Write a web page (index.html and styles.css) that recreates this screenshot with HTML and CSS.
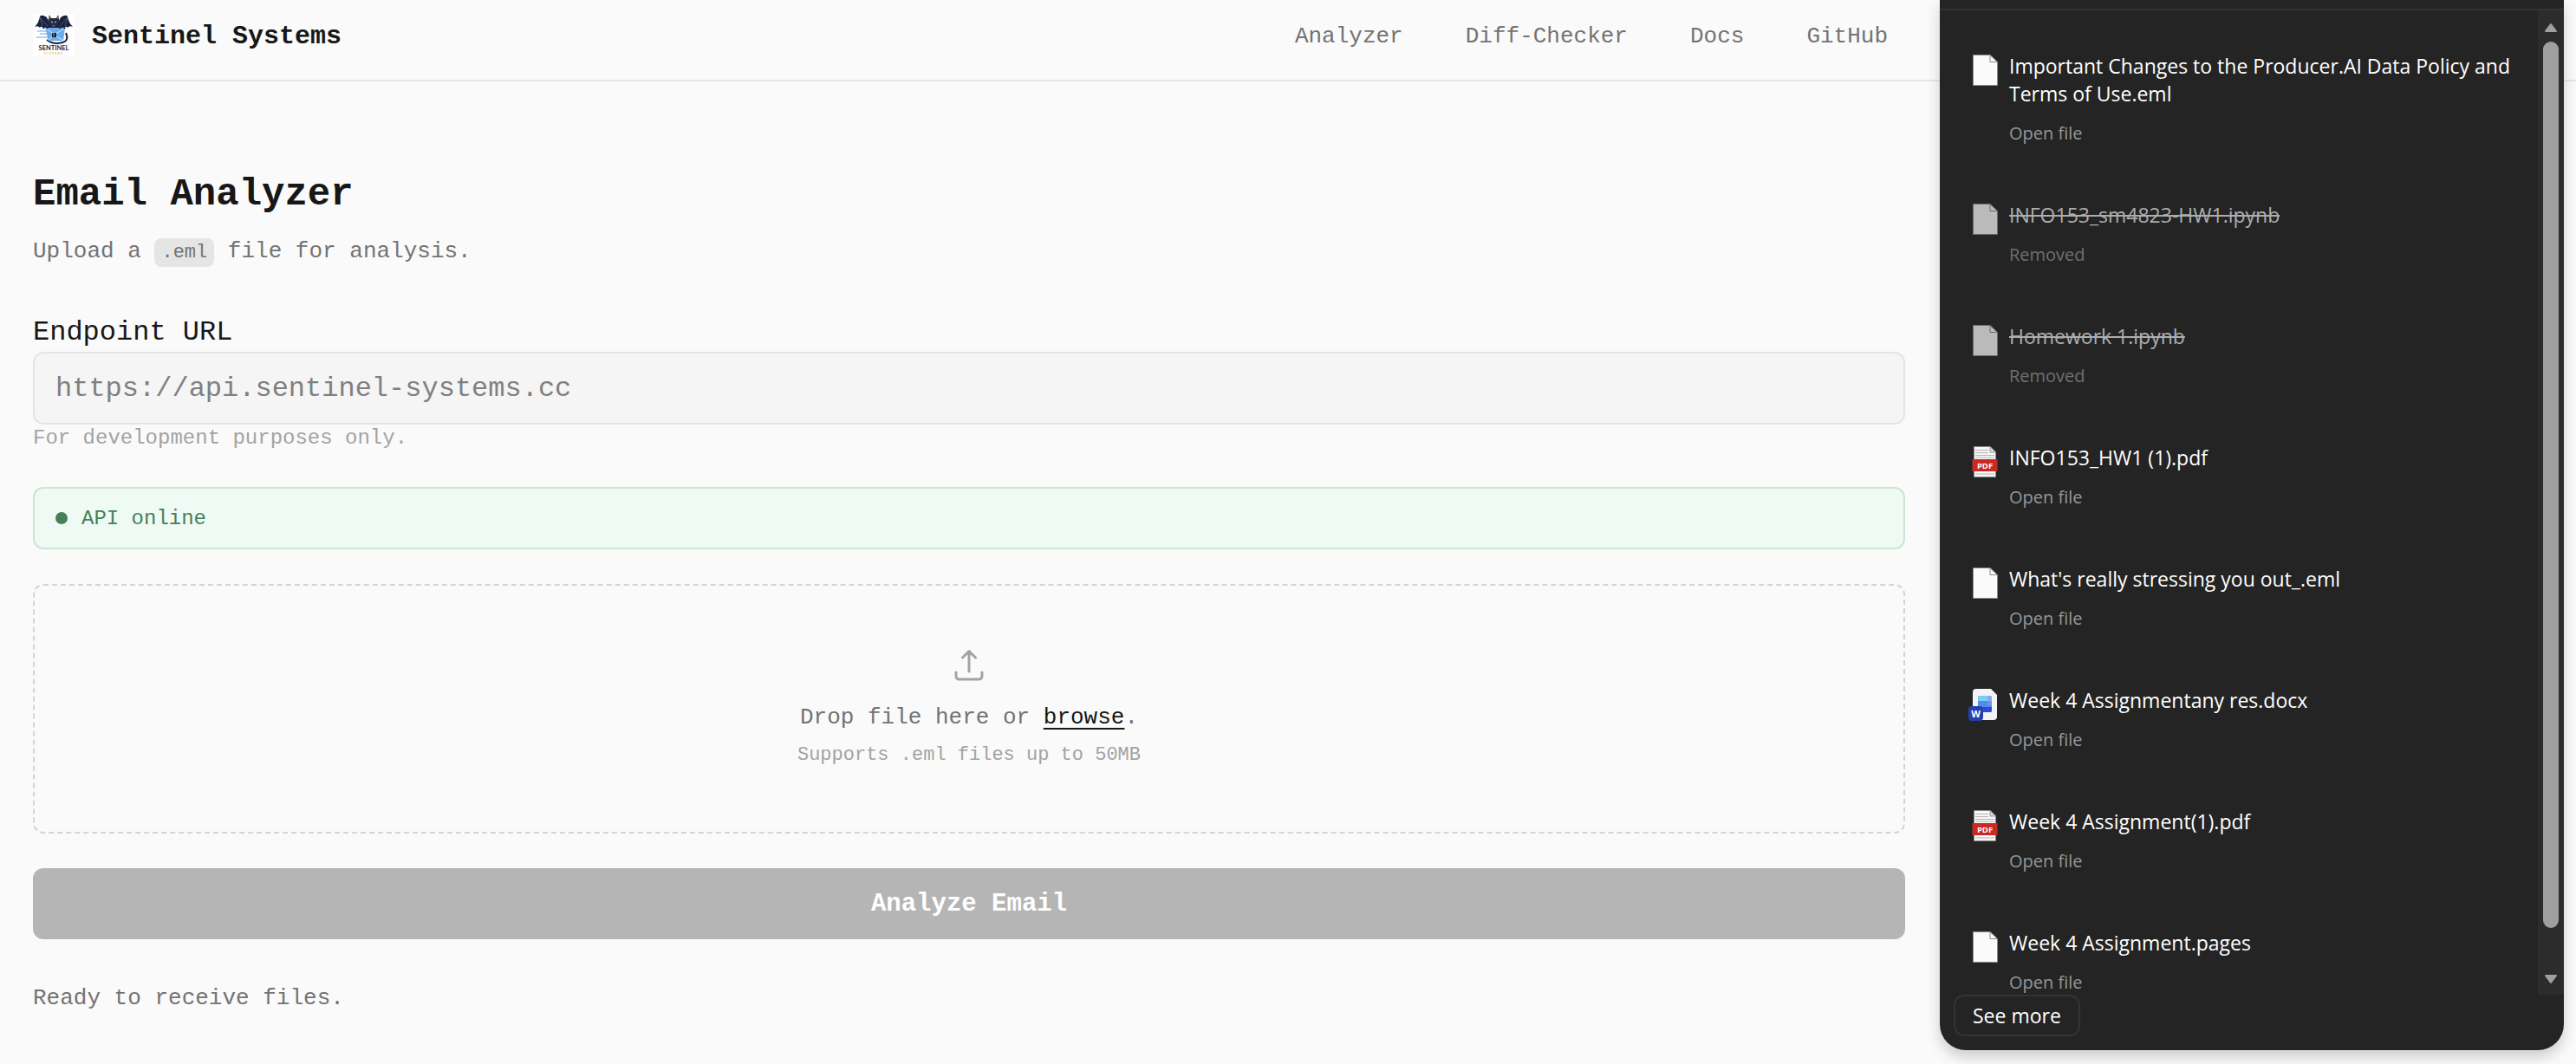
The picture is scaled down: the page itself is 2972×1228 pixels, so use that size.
FILE: index.html
```html
<!DOCTYPE html>
<html lang="en">
<head>
  <meta charset="UTF-8" />
  <meta name="viewport" content="width=device-width, initial-scale=1.0" />
  <title>Sentinel Systems</title>
  <link rel="stylesheet" href="styles.css">
</head>
<body>
  <!-- shared file icons -->
  <svg class="sprite" aria-hidden="true">
    <symbol id="file-blank" viewBox="0 0 36 38">
      <path d="M6.500 1.500H26L34.500 9.500V36.500H6.500Z" fill="#fafafa" stroke="#8a8a8a"/>
      <path d="M26 1.500V9.500H34.500" fill="none" stroke="#8a8a8a"/>
    </symbol>
    <symbol id="file-pdf" viewBox="0 0 36 38">
      <path d="M7.500 1.500H26L32.500 8V36.500H7.500Z" fill="#f7f7f7" stroke="#8a8a8a"/>
      <path d="M26 1.500V8H32.500Z" fill="#ddd" stroke="#999"/>
      <path d="M9 5.500H24M9 8.500H24M9 11.500H31M9 14H31M9 33H31" stroke="#b5b5b5"/>
      <rect x="5.500" y="16" width="29" height="14" fill="#c82a24"/>
      <text x="20" y="26.500" text-anchor="middle" font-family="Open Sans, sans-serif" font-size="9.500" font-weight="700" fill="#fff">PDF</text>
    </symbol>
    <symbol id="file-docx" viewBox="0 0 36 38">
      <path d="M10 1H27L34 8V33Q34 37 30 37H10Q6 37 6 33V5Q6 1 10 1Z" fill="#f4f4f6"/>
      <rect x="12" y="9" width="16" height="19" rx="2" fill="#4a8fe8"/>
      <path d="M12 15V11Q12 9 14 9H26Q28 9 28 11V15Z" fill="#78cdf8"/>
      <path d="M23 9H26Q28 9 28 11V20H23Z" fill="#9b8cf2" opacity=".6"/>
      <path d="M12 22H28V26Q28 28 26 28H12Z" fill="#2f49dc"/>
      <rect x="1" y="21" width="17" height="17" rx="4" fill="#2540ad"/>
      <text x="9.500" y="33.500" text-anchor="middle" font-family="Open Sans, sans-serif" font-size="11" font-weight="700" fill="#fff">W</text>
    </symbol>
  </svg>

  <header class="header">
    <a class="brand" href="#">
      <svg class="logo" viewBox="0 0 48 48" aria-hidden="true">
        <rect width="48" height="48" fill="#fff"/>
        <path d="M16 4Q10 0 8 3Q7 10 2 15Q6 13 8 16Q10 13 12 17Q14 14 18 17H30Q34 14 36 17Q38 13 40 16Q42 13 46 15Q41 10 40 3Q38 0 32 4L30 9H18Z" fill="#18213f"/>
        <path d="M8 4L17 14M8 4L11 14M40 4L31 14M40 4L37 14" stroke="#7d829b" stroke-width=".6"/>
        <path d="M19 1L21 5H27L29 1L31 9L27 15H21L17 9Z" fill="#242b45"/>
        <path d="M19 2V6M29 2V6" stroke="#b29a4c"/>
        <path d="M21 9L23 10M27 9L25 10" stroke="#dce5ff"/>
        <path d="M22 13H26L24 15Z" fill="#b53b42"/>
        <path d="M38 22Q42 31 34 33Q24 36 16 30" fill="none" stroke="#1b2545" stroke-width="2"/>
        <path d="M5 20H18M8 23H18M4 27H18" stroke="#91c6f3" stroke-width="1.500"/>
        <path d="M14 16H37L35 31H18Z" fill="#6cace8"/>
        <path d="M14 16L25 24L37 16M18 31L24 24L35 31" fill="none" stroke="#d4eaff"/>
        <path d="M12 17Q14 12 17 17M31 17Q34 12 37 17" stroke="#20294a" stroke-width="2" fill="none"/>
        <rect x="22" y="22" width="5" height="5" rx="1" fill="#151a28"/>
        <path d="M24 22V26" stroke="#d3ad3a"/>
        <text x="24" y="42" text-anchor="middle" font-family="Lato, sans-serif" font-size="7.500" font-weight="700" fill="#1c2442">SENTINEL</text>
        <text x="24" y="47" text-anchor="middle" font-family="Lato, sans-serif" font-size="3.500" letter-spacing="1" fill="#d9bd6b">SYSTEMS</text>
      </svg>
      <span>Sentinel Systems</span>
    </a>
    <nav class="nav">
      <a href="#">Analyzer</a>
      <a href="#">Diff-Checker</a>
      <a href="#">Docs</a>
      <a href="#">GitHub</a>
    </nav>
  </header>

  <main class="container">
    <h1>Email Analyzer</h1>
    <p class="subtitle">Upload a <code>.eml</code> file for analysis.</p>

    <form class="form">
      <label class="field-label" for="endpoint">Endpoint URL</label>
      <input class="field-input" id="endpoint" type="url" placeholder="https://api.sentinel-systems.cc">
      <p class="field-hint">For development purposes only.</p>

      <div class="api-status"><span class="dot"></span>API online</div>

      <div class="dropzone">
        <svg class="upload-icon" viewBox="0 0 40 40" aria-hidden="true">
          <path d="M20 27V4M12.500 11L20 3.500L27.500 11M5 28V32Q5 36 9 36H31Q35 36 35 32V28"/>
        </svg>
        <p class="drop-text">Drop file here or <a href="#">browse</a>.</p>
        <p class="drop-hint">Supports .eml files up to 50MB</p>
      </div>

      <button class="analyze" type="submit" disabled>Analyze Email</button>
    </form>

    <p class="status">Ready to receive files.</p>
  </main>

  <aside class="downloads" aria-label="Downloads">
    <div class="downloads-body">
      <ul class="file-list">
        <li class="file">
          <svg class="file-icon" aria-hidden="true"><use href="#file-blank"/></svg>
          <div class="file-info">
            <p class="file-name">Important Changes to the Producer.AI Data Policy and Terms of Use.eml</p>
            <a class="file-action" href="#">Open file</a>
          </div>
        </li>
        <li class="file removed">
          <svg class="file-icon" aria-hidden="true"><use href="#file-blank"/></svg>
          <div class="file-info">
            <p class="file-name">INFO153_sm4823-HW1.ipynb</p>
            <span class="file-action">Removed</span>
          </div>
        </li>
        <li class="file removed">
          <svg class="file-icon" aria-hidden="true"><use href="#file-blank"/></svg>
          <div class="file-info">
            <p class="file-name">Homework 1.ipynb</p>
            <span class="file-action">Removed</span>
          </div>
        </li>
        <li class="file">
          <svg class="file-icon" aria-hidden="true"><use href="#file-pdf"/></svg>
          <div class="file-info">
            <p class="file-name">INFO153_HW1 (1).pdf</p>
            <a class="file-action" href="#">Open file</a>
          </div>
        </li>
        <li class="file">
          <svg class="file-icon" aria-hidden="true"><use href="#file-blank"/></svg>
          <div class="file-info">
            <p class="file-name">What's really stressing you out_.eml</p>
            <a class="file-action" href="#">Open file</a>
          </div>
        </li>
        <li class="file">
          <svg class="file-icon" aria-hidden="true"><use href="#file-docx"/></svg>
          <div class="file-info">
            <p class="file-name">Week 4 Assignmentany res.docx</p>
            <a class="file-action" href="#">Open file</a>
          </div>
        </li>
        <li class="file">
          <svg class="file-icon" aria-hidden="true"><use href="#file-pdf"/></svg>
          <div class="file-info">
            <p class="file-name">Week 4 Assignment(1).pdf</p>
            <a class="file-action" href="#">Open file</a>
          </div>
        </li>
        <li class="file">
          <svg class="file-icon" aria-hidden="true"><use href="#file-blank"/></svg>
          <div class="file-info">
            <p class="file-name">Week 4 Assignment.pages</p>
            <a class="file-action" href="#">Open file</a>
          </div>
        </li>
      </ul>
      <div class="scrollbar" aria-hidden="true">
        <svg class="arrow" viewBox="0 0 16 12"><path d="M8 2L14 10H2Z"/></svg>
        <div class="track"><div class="thumb"></div></div>
        <svg class="arrow" viewBox="0 0 16 12"><path d="M2 2H14L8 10Z"/></svg>
      </div>
    </div>
    <button class="see-more" type="button">See more</button>
  </aside>
</body>
</html>
```

FILE: styles.css
```css
* {
  box-sizing: border-box;
}

body {
  margin: 0;
  position: relative;
  min-height: 100vh;
  font-family: "Liberation Mono", monospace;
  font-size: 26px;
  background-color: #fafafa;
  color: #171717;
}

h1, p, ul {
  margin: 0;
  padding: 0;
}

a {
  color: inherit;
  text-decoration: none;
}

.sprite {
  display: none;
}

/* Header */
.header {
  display: flex;
  justify-content: space-between;
  align-items: center;
  padding: 16px 794px 28px 38px;
  border-bottom: 2px solid #e5e5e5;
}

.brand {
  display: flex;
  align-items: center;
  gap: 20px;
  font-size: 30px;
  font-weight: bold;
}

.brand span,
.nav {
  padding-top: 4px;
}

.logo {
  width: 48px;
  height: 48px;
}

.nav {
  display: flex;
  gap: 72px;
  color: #737373;
}

/* Analyzer */
.container {
  padding: 102px 774px 56px 38px;
}

h1 {
  font-size: 44px;
  line-height: 56px;
}

.subtitle {
  margin: 18px 0 50px;
  line-height: 40px;
  color: #737373;
}

.subtitle code {
  padding: 4px 8px;
  font-family: inherit;
  font-size: 22px;
  background-color: #e5e5e5;
  border-radius: 8px;
}

.field-label {
  display: block;
  font-size: 32px;
  line-height: 44px;
}

.field-input {
  display: block;
  width: 100%;
  height: 84px;
  padding: 0 24px;
  font-family: inherit;
  font-size: 32px;
  background-color: #f5f5f5;
  border: 2px solid #e5e5e5;
  border-radius: 12px;
}

.field-input::placeholder {
  color: #808080;
}

.field-hint {
  font-size: 24px;
  line-height: 32px;
  color: #a3a3a3;
}

.api-status {
  display: flex;
  align-items: center;
  gap: 16px;
  height: 72px;
  margin: 40px 0;
  padding: 0 24px;
  font-size: 24px;
  color: #468058;
  background-color: #f0faf5;
  border: 2px solid #c8e6d2;
  border-radius: 12px;
}

.dot {
  width: 14px;
  height: 14px;
  background-color: #468058;
  border-radius: 50%;
}

.dropzone {
  padding: 72px 24px;
  text-align: center;
  border: 2px dashed #d4d4d4;
  border-radius: 12px;
}

.upload-icon {
  display: block;
  width: 40px;
  height: 40px;
  margin: 0 auto 22px;
  fill: none;
  stroke: #a3a3a3;
  stroke-width: 3;
  stroke-linecap: round;
  stroke-linejoin: round;
}

.drop-text {
  line-height: 36px;
  color: #737373;
}

.drop-text a {
  color: #171717;
  text-decoration: underline;
  text-decoration-thickness: 2px;
  text-underline-offset: 5px;
}

.drop-hint {
  margin-top: 10px;
  font-size: 22px;
  line-height: 32px;
  color: #a3a3a3;
}

.analyze {
  display: block;
  width: 100%;
  height: 82px;
  margin: 40px 0 48px;
  font-family: inherit;
  font-size: 29px;
  font-weight: bold;
  color: #fff;
  background-color: #b5b5b5;
  border: none;
  border-radius: 12px;
}

.status {
  line-height: 40px;
  color: #737373;
}

/* Downloads popup, lies over the page */
.downloads {
  position: absolute;
  top: 0;
  right: 14px;
  bottom: 16px;
  display: flex;
  flex-direction: column;
  align-items: flex-start;
  width: 720px;
  padding: 10px 0 16px;
  font-family: "Open Sans", sans-serif;
  font-size: 23px;
  color: #fff;
  background-color: #242424;
  border-radius: 0 0 30px 30px;
  box-shadow: 0 8px 16px rgba(0, 0, 0, 0.18);
}

.downloads-body {
  display: flex;
  flex: 1;
  width: 100%;
  min-height: 0;
  border-top: 2px solid #333;
}

.file-list {
  flex: 1;
  padding: 18px 24px 0 32px;
  overflow: hidden;
  list-style: none;
}

.file {
  display: flex;
  gap: 12px;
  padding: 30px 0 32px;
}

.file-icon {
  flex: none;
  width: 36px;
  height: 38px;
  margin-top: 2px;
}

.file-name {
  line-height: 32px;
}

.file-action {
  display: block;
  margin-top: 14px;
  font-size: 20px;
  line-height: 32px;
  color: #969696;
}

.removed .file-icon {
  opacity: 0.7;
}

.removed .file-name {
  color: #adadad;
  text-decoration: line-through;
}

.removed .file-action {
  color: #707070;
}

.scrollbar {
  display: flex;
  flex-direction: column;
  align-items: center;
  gap: 10px;
  width: 30px;
  padding: 14px 0 12px;
  background-color: #2c2c2c;
}

.arrow {
  width: 16px;
  height: 12px;
  fill: #9f9f9f;
  stroke: #9f9f9f;
  stroke-width: 2;
  stroke-linejoin: round;
}

.track {
  flex: 1;
}

.thumb {
  width: 18px;
  height: 96%;
  background-color: #9f9f9f;
  border-radius: 9px;
}

.see-more {
  height: 48px;
  margin-left: 16px;
  padding: 0 20px;
  font-family: inherit;
  font-size: 23px;
  color: #fff;
  background-color: transparent;
  border: 2px solid #333;
  border-radius: 12px;
}
```
